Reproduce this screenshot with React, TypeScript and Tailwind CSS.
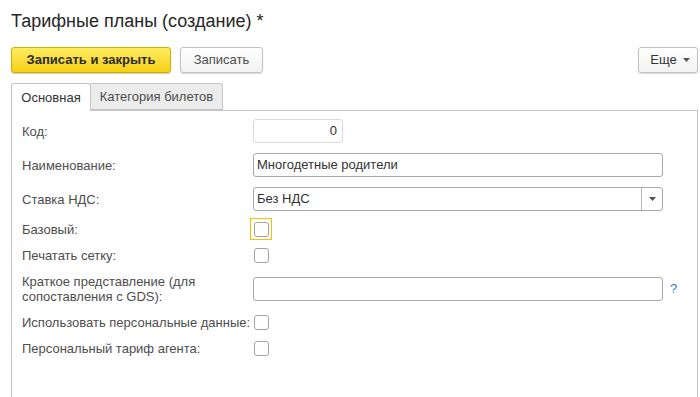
import type { ReactNode } from 'react'

function Caret() {
  return (
    <svg width="7" height="4" viewBox="0 0 7 4" className="shrink-0">
      <path d="M0 0h7L3.5 4z" fill="#555" />
    </svg>
  )
}

function Checkbox({ focused = false }: { focused?: boolean }) {
  return (
    <div
      className={`-ml-[3px] w-[22px] h-[22px] flex items-center justify-center border ${
        focused ? 'border-[#f2c200]' : 'border-transparent'
      }`}
    >
      <div className="w-[15px] h-[15px] border border-[#a3a3a3] rounded-[3px] bg-white" />
    </div>
  )
}

function Row({ label, className = '', children }: { label: ReactNode; className?: string; children: ReactNode }) {
  return (
    <div className={`flex items-center ${className}`}>
      <div className="w-[231px] shrink-0 text-[13px] leading-[15px] text-[#4d4d4d]">{label}</div>
      {children}
    </div>
  )
}

export default function App() {
  return (
    <div className="w-[700px] h-[397px] overflow-hidden bg-white font-['Liberation_Sans',Arial,sans-serif]">
      {/* Header */}
      <h1 className="pt-[10px] pl-[11px] text-[18px] leading-[22px] text-[#262626]">
        Тарифные планы (создание) *
      </h1>

      {/* Command bar */}
      <div className="mt-[15px] pl-[11px] pr-[2px] flex items-center">
        <button className="h-[26px] w-[160px] rounded-[3px] border border-[#d1ac00] bg-gradient-to-b from-[#ffec5c] to-[#f6d000] text-[13px] font-bold text-[#2b2b2b] shadow-[0_1px_1px_rgba(0,0,0,0.2)]">
          Записать и закрыть
        </button>
        <button className="ml-[9px] h-[26px] w-[83px] rounded-[3px] border border-[#c2c2c2] bg-gradient-to-b from-white to-[#f2f2f2] text-[13px] text-[#4d4d4d] shadow-[0_1px_1px_rgba(0,0,0,0.15)]">
          Записать
        </button>
        <button className="ml-auto h-[26px] w-[60px] rounded-[3px] border border-[#c2c2c2] bg-gradient-to-b from-white to-[#f2f2f2] text-[13px] text-[#333] shadow-[0_1px_1px_rgba(0,0,0,0.15)] flex items-center justify-center gap-[6px] pl-[4px]">
          Еще
          <Caret />
        </button>
      </div>

      {/* Tabs */}
      <div className="mt-[10px] pl-[11px] pr-[2px] flex items-end">
        <div className="h-[28px] w-[80px] border border-b-0 border-[#c4c4c4] rounded-t-[3px] bg-white flex items-center justify-center text-[13px] text-[#333] relative z-10">
          Основная
        </div>
        <div className="h-[27px] w-[132px] border border-l-0 border-[#c4c4c4] rounded-tr-[3px] bg-[#ececec] flex items-center justify-center text-[13px] text-[#4d4d4d] self-start">
          Категория билетов
        </div>
        <div className="flex-1 border-b border-[#c4c4c4]" />
      </div>

      {/* Panel */}
      <div className="ml-[11px] mr-[2px] -mt-px h-[300px] border border-[#c4c4c4] pl-[10px] pt-[8px]">
        <Row label="Код:">
          <div className="w-[90px] h-[24px] rounded-[3px] border border-[#d9d9d9] bg-white text-right pr-[5px] text-[13px] leading-[22px] text-[#333]">
            0
          </div>
        </Row>

        <Row label="Наименование:" className="mt-[10px]">
          <div className="w-[410px] h-[24px] rounded-[3px] border border-[#a9a9a9] bg-white pl-[3px] text-[13px] leading-[22px] text-[#333]">
            Многодетные родители
          </div>
        </Row>

        <Row label="Ставка НДС:" className="mt-[10px]">
          <div className="w-[410px] h-[24px] rounded-[3px] border border-[#a9a9a9] bg-white flex">
            <div className="flex-1 pl-[3px] text-[13px] leading-[22px] text-[#333]">Без НДС</div>
            <div className="w-[21px] border-l border-[#b5b5b5] flex items-center justify-center">
              <Caret />
            </div>
          </div>
        </Row>

        <Row label="Базовый:" className="mt-[7px] h-[22px]">
          <Checkbox focused />
        </Row>

        <Row label="Печатать сетку:" className="mt-[4px] h-[22px]">
          <Checkbox />
        </Row>

        <Row
          label={
            <>
              Краткое представление (для
              <br />
              сопоставления с GDS):
            </>
          }
          className="mt-[8px] h-[30px]"
        >
          <div className="w-[410px] h-[24px] rounded-[3px] border border-[#a9a9a9] bg-white" />
          <span className="ml-[7px] text-[13px] text-[#1f7fd0]">?</span>
        </Row>

        <Row label="Использовать персональные данные:" className="mt-[7px] h-[22px]">
          <Checkbox />
        </Row>

        <Row label="Персональный тариф агента:" className="mt-[4px] h-[22px]">
          <Checkbox />
        </Row>
      </div>
    </div>
  )
}
